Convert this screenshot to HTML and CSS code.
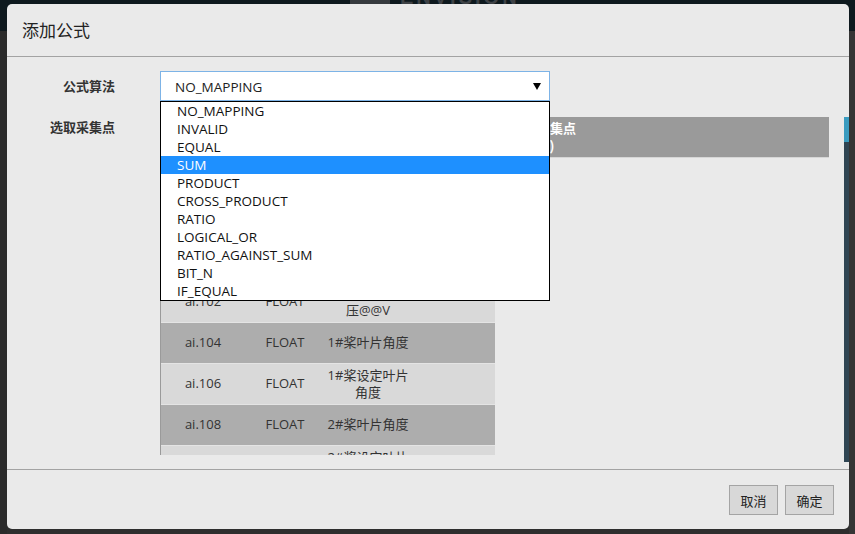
FILE: index.html
```html
<!DOCTYPE html>
<html lang="zh-CN">
<head>
<meta charset="utf-8">
<title>添加公式</title>
<link rel="stylesheet" href="styles.css">
</head>
<body>
<div class="backdrop">
  <div class="bg-top">
    <div class="bg-logo"><span class="bg-logo-mark"></span><span class="bg-logo-text">ENVISION</span></div>
  </div>
  <div class="modal">
    <div class="modal-header"><h4 class="modal-title">添加公式</h4></div>
    <div class="modal-body">
      <div class="form-row row-formula">
        <label class="form-label">公式算法</label>
        <div class="select-wrap">
          <div class="select-box">
            <span class="select-value">NO_MAPPING</span>
            <svg class="select-arrow" width="8" height="7" viewBox="0 0 8 7"><polygon points="0,0 8,0 4,7" fill="#000"/></svg>
          </div>
          <ul class="select-menu">
            <li>NO_MAPPING</li>
            <li>INVALID</li>
            <li>EQUAL</li>
            <li class="active">SUM</li>
            <li>PRODUCT</li>
            <li>CROSS_PRODUCT</li>
            <li>RATIO</li>
            <li>LOGICAL_OR</li>
            <li>RATIO_AGAINST_SUM</li>
            <li>BIT_N</li>
            <li>IF_EQUAL</li>
          </ul>
        </div>
      </div>
      <div class="form-row row-points">
        <label class="form-label">选取采集点</label>
        <div class="points">
          <div class="point-table-wrap">
            <table class="point-table">
              <colgroup><col class="c1"><col class="c2"><col class="c3"><col class="c4"></colgroup>
              <thead><tr><th>采集点</th><th>类型</th><th>描述</th><th></th></tr></thead>
              <tbody>
                <tr class="dark"><td>ai.096</td><td>FLOAT</td><td>机舱温度</td><td></td></tr>
                <tr class="light"><td>ai.098</td><td>FLOAT</td><td>环境温度</td><td></td></tr>
                <tr class="dark"><td>ai.100</td><td>FLOAT</td><td>1#桨电机温度</td><td></td></tr>
                <tr class="light"><td>ai.102</td><td>FLOAT</td><td>1#桨电池电<br>压@@V</td><td></td></tr>
                <tr class="dark"><td>ai.104</td><td>FLOAT</td><td>1#桨叶片角度</td><td></td></tr>
                <tr class="light"><td>ai.106</td><td>FLOAT</td><td>1#桨设定叶片角度</td><td></td></tr>
                <tr class="dark"><td>ai.108</td><td>FLOAT</td><td>2#桨叶片角度</td><td></td></tr>
                <tr class="light"><td>ai.110</td><td>FLOAT</td><td>2#桨设定叶片角度</td><td></td></tr>
              </tbody>
            </table>
          </div>
          <div class="selected-panel">
            <div class="selected-head">已选采集点<br>总数(0)</div>
          </div>
        </div>
      </div>
    </div>
    <div class="modal-footer">
      <button class="btn">取消</button>
      <button class="btn">确定</button>
    </div>
    <div class="side-scroll"><div class="side-thumb"></div></div>
  </div>
</div>
</body>
</html>
```

FILE: styles.css
```css
* { box-sizing: border-box; }
html, body { margin: 0; padding: 0; }
body {
  width: 855px;
  height: 534px;
  overflow: hidden;
  background: #2c2c2c;
  font-family: "Open Sans", "Noto Sans CJK SC", sans-serif;
  font-size: 13px;
  color: #333;
}
.backdrop {
  position: relative;
  width: 855px;
  height: 534px;
  background: linear-gradient(to right, #2b2b2b 0 7px, #2e2e2e 7px 849px, #353535 849px);
}
.bg-top {
  height: 31px;
  background: #0e191e;
  position: relative;
}
.bg-logo {
  position: absolute;
  left: 350px;
  top: -12px;
  display: flex;
  align-items: flex-end;
  gap: 10px;
}
.bg-logo-mark {
  width: 40px;
  height: 16px;
  background: #363a3e;
}
.bg-logo-text {
  font-family: "Liberation Sans", sans-serif;
  font-weight: bold;
  font-size: 20px;
  line-height: 18px;
  letter-spacing: 3px;
  color: #3e4246;
}
.modal {
  position: absolute;
  left: 7px;
  top: 4px;
  width: 842px;
  height: 525px;
  background: #eaeaea;
  border-radius: 5px;
  overflow: hidden;
}
.modal-header {
  height: 53px;
  padding: 0 15px;
  border-bottom: 1px solid #a3a3a3;
  display: flex;
  align-items: center;
}
.modal-title {
  margin: 0;
  font-family: "Noto Sans CJK SC", sans-serif;
  font-weight: normal;
  font-size: 17px;
  line-height: 20px;
  color: #222;
  padding-bottom: 1px;
}
.modal-body {
  height: 412px;
  padding-top: 14px;
}
.form-row {
  display: flex;
  align-items: flex-start;
}
.form-label {
  width: 108px;
  margin-right: 45px;
  text-align: right;
  font-family: "Noto Sans CJK SC", sans-serif;
  font-weight: bold;
  font-size: 13px;
  color: #333;
}
.row-formula .form-label { line-height: 30px; }
.row-points { margin-top: 16px; }
.row-points .form-label { line-height: 20px; }

.select-wrap {
  position: relative;
  width: 390px;
  z-index: 5;
}
.select-box {
  height: 30px;
  background: #fff;
  border: 1px solid #7db3e6;
  display: flex;
  align-items: center;
  justify-content: space-between;
  padding: 0 8px 0 14px;
  color: #222;
}
.select-value { font-size: 13.5px; line-height: 18px; padding-top: 1px; }
.select-arrow { display: block; margin-top: 1px; }
.select-menu {
  position: absolute;
  left: 0;
  top: 30px;
  width: 390px;
  margin: 0;
  padding: 0;
  list-style: none;
  background: #fff;
  border: 1px solid #000;
}
.select-menu li {
  height: 18px;
  line-height: 18px;
  padding-left: 16px;
  font-size: 13.5px;
  color: #111;
}
.select-menu li.active {
  background: #1e90ff;
  color: #fff;
}

.points {
  display: flex;
  gap: 10px;
}
.point-table-wrap {
  width: 335px;
  height: 338px;
  overflow: hidden;
  border-left: 1px solid #9a9a9a;
}
.point-table {
  width: 334px;
  table-layout: fixed;
  border-collapse: collapse;
}
.point-table col.c1 { width: 84px; }
.point-table col.c2 { width: 80px; }
.point-table col.c3 { width: 86px; }
.point-table col.c4 { width: 84px; }
.point-table th,
.point-table td {
  height: 41px;
  padding: 0;
  text-align: center;
  vertical-align: middle;
  line-height: 17px;
  border-bottom: 1px solid #e4e4e4;
  font-weight: normal;
}
.point-table th {
  background: #999;
  color: #fff;
  font-family: "Noto Sans CJK SC", sans-serif;
  font-weight: bold;
}
.point-table tr.dark td { background: #adadad; }
.point-table tr.light td { background: #d9d9d9; }

.selected-panel {
  width: 324px;
}
.selected-head {
  height: 41px;
  background: #9a9a9a;
  border-bottom: 1px solid #d6d6d6;
  color: #fff;
  font-family: "Noto Sans CJK SC", sans-serif;
  font-weight: bold;
  line-height: 18px;
  padding: 2px 6px 0;
}

.modal-footer {
  border-top: 1px solid #a3a3a3;
  height: 60px;
  display: flex;
  justify-content: flex-end;
  align-items: flex-start;
  gap: 7px;
  padding: 15px 15px 0 0;
}
.btn {
  width: 49px;
  height: 30px;
  padding: 0;
  background: #d8d8d8;
  border: 1px solid #a4a4a4;
  border-radius: 0;
  font-family: "Noto Sans CJK SC", sans-serif;
  font-size: 13px;
  color: #222;
}

.side-scroll {
  position: absolute;
  right: 0;
  top: 113px;
  width: 5px;
  height: 345px;
  background: #2f4553;
}
.side-thumb {
  height: 25px;
  background: #3a9cc0;
}
```
